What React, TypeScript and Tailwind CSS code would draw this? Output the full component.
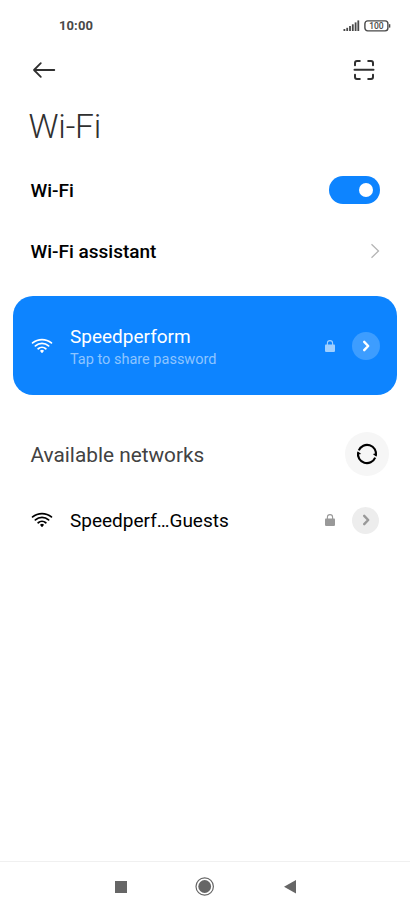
import clsx from "clsx";

function WifiIcon({ className }: { className?: string }) {
  return (
    <svg
      viewBox="0 0 22 16"
      className={clsx("w-[22px] h-4 shrink-0", className)}
      fill="none"
      stroke="currentColor"
      strokeWidth="1.8"
      strokeLinecap="round"
    >
      <path d="M1.6 4.9C7 .4 15 .4 20.4 4.9" />
      <path d="M4.4 7.9C8.3 4.6 13.7 4.6 17.6 7.9" />
      <path d="M7.2 10.7C9.4 8.8 12.6 8.8 14.8 10.7" />
      <path
        d="M9.8 12.9C10.5 12.4 11.5 12.4 12.2 12.9L11 14.2Z"
        fill="currentColor"
        strokeWidth="1.3"
        strokeLinejoin="round"
      />
    </svg>
  );
}

function LockIcon({ className }: { className?: string }) {
  return (
    <svg viewBox="0 0 12 14" className={clsx("w-3 h-3.5 shrink-0", className)}>
      <rect x="1" y="5.4" width="10" height="7.5" rx="0.8" fill="currentColor" />
      <path
        d="M3.4 6V4.2a2.6 2.6 0 0 1 5.2 0V6"
        fill="none"
        stroke="currentColor"
        strokeWidth="1.1"
      />
    </svg>
  );
}

function DetailButton({ className, size }: { className: string; size: string }) {
  return (
    <button
      className={clsx(
        "rounded-full flex items-center justify-center shrink-0",
        size,
        className
      )}
    >
      <svg
        viewBox="0 0 10 14"
        className="w-2.5 h-3.5"
        fill="none"
        stroke="currentColor"
        strokeWidth="2.4"
        strokeLinecap="round"
        strokeLinejoin="round"
      >
        <path d="M3.2 2.8L7.2 7L3.2 11.2" />
      </svg>
    </button>
  );
}

function StatusBar() {
  return (
    <div className="h-[52px] flex items-center justify-between pl-[59px] pr-[19px] text-[#484848]">
      <span className="text-[13px] font-bold tracking-[0.1px]">10:00</span>
      <div className="flex items-center gap-1">
        <svg viewBox="0 0 17 12" className="w-[17px] h-3" fill="currentColor">
          <rect x="0.5" y="9" width="1.8" height="2" />
          <rect x="3.3" y="7.8" width="1.8" height="3.2" />
          <rect x="6.1" y="6" width="1.8" height="5" />
          <rect x="8.9" y="4.3" width="1.8" height="6.7" />
          <rect x="11.7" y="2.4" width="1.8" height="8.6" />
          <rect x="14.4" y="0.4" width="1.8" height="10.6" />
        </svg>
        <svg viewBox="0 0 27 12" className="w-[27px] h-3">
          <rect
            x="0.9"
            y="0.9"
            width="23"
            height="10"
            rx="2.8"
            fill="none"
            stroke="currentColor"
            strokeWidth="1.4"
          />
          <rect x="25" y="4.2" width="1.3" height="3.4" fill="currentColor" />
          <text
            x="12.4"
            y="9.1"
            textAnchor="middle"
            fill="currentColor"
            className="text-[8.5px] font-medium"
          >
            100
          </text>
        </svg>
      </div>
    </div>
  );
}

function Header() {
  return (
    <div className="h-9 flex items-center justify-between pl-8 pr-[35px] text-[#303030]">
      <svg
        viewBox="0 0 24 18"
        className="w-6 h-[18px]"
        fill="none"
        stroke="currentColor"
        strokeWidth="1.8"
        strokeLinecap="round"
        strokeLinejoin="round"
      >
        <path d="M22.3 9H2M8.8 2.2L2 9L8.8 15.8" />
      </svg>
      <svg
        viewBox="0 0 22 22"
        className="w-[22px] h-[22px]"
        fill="none"
        stroke="currentColor"
        strokeWidth="2"
        strokeLinecap="round"
      >
        <path d="M2 6.3V4Q2 2 4 2H6.8M15.2 2H18Q20 2 20 4V6.3M20 15.7V18Q20 20 18 20H15.2M6.8 20H4Q2 20 2 18V15.7" />
        <path d="M1.5 10.8H20.5" />
      </svg>
    </div>
  );
}

function NavBar() {
  return (
    <div className="h-[50px] border-t border-[#f0f0f0] flex items-center justify-between pl-[115px] pr-[114px] text-[#666]">
      <div className="w-3 h-3 bg-[#666]" />
      <svg viewBox="0 0 20 20" className="w-5 h-5 mr-0.5">
        <circle cx="9.7" cy="9.5" r="8.7" fill="none" stroke="currentColor" strokeWidth="1.2" />
        <circle cx="9.7" cy="9.5" r="6.4" fill="currentColor" />
      </svg>
      <svg viewBox="0 0 12 14" className="w-3 h-3.5" fill="currentColor">
        <path d="M12 0V13.4L0 6.7Z" />
      </svg>
    </div>
  );
}

export default function App() {
  return (
    <div className="w-[410px] h-[911px] bg-white flex flex-col overflow-hidden whitespace-nowrap font-['Roboto',sans-serif]">
      <StatusBar />
      <Header />

      <h1 className="h-[78px] flex items-center pl-[28.5px] pt-px text-[33.5px] font-light tracking-[-0.2px] text-[#303030]">
        Wi-Fi
      </h1>

      <div className="h-12 flex items-center justify-between pl-[30.5px] pr-[30.5px]">
        <span className="pt-0.5 text-[19px] font-medium">Wi-Fi</span>
        <div className="w-[51px] h-7 rounded-full bg-[#0d84ff] flex items-center justify-end pr-[7px]">
          <div className="w-3.5 h-3.5 rounded-full bg-white" />
        </div>
      </div>

      <div className="h-[74px] flex items-center justify-between pl-[30.5px] pr-[30px]">
        <span className="pt-0.5 text-[19px] font-medium">Wi-Fi assistant</span>
        <svg
          viewBox="0 0 10 16"
          className="w-2.5 h-4 text-[#b5b5b5]"
          fill="none"
          stroke="currentColor"
          strokeWidth="1.3"
        >
          <path d="M1.5 1.3L8.5 8L1.5 14.7" />
        </svg>
      </div>

      {/* connected network */}
      <div className="mt-2 mx-[13px] h-[99px] shrink-0 rounded-[20px] bg-[#0d84ff] flex items-center pl-[18px] pr-[17px] text-white">
        <WifiIcon />
        <div className="ml-[17px] mt-[3px] flex-1">
          <div className="text-[19px] leading-6">Speedperform</div>
          <div className="text-[14.5px] leading-[21px] text-[#8dc5ff]">
            Tap to share password
          </div>
        </div>
        <LockIcon className="text-[#9fcfff]" />
        <DetailButton className="ml-4 bg-[#3d9dff] text-white" size="w-7 h-7" />
      </div>

      <div className="mt-[37px] h-11 shrink-0 flex items-center justify-between pl-[30.5px] pr-[21px]">
        <span className="pt-[3px] text-[20.8px] text-[#424242]">Available networks</span>
        <button className="w-11 h-11 rounded-full bg-[#f6f6f6] flex items-center justify-center">
          <svg
            viewBox="0 0 22 22"
            className="w-[22px] h-[22px]"
            fill="none"
            stroke="black"
            strokeWidth="2.1"
          >
            <path d="M2.8 7.3A9 9 0 0 1 19.9 12.6" />
            <path d="M19.2 14.7A9 9 0 0 1 2.1 9.4" />
            <path d="M16.8 10.9L20.5 13.8L20.9 10.2Z" fill="black" stroke="none" />
            <path d="M5.2 11.1L1.5 8.2L1.1 11.8Z" fill="black" stroke="none" />
          </svg>
        </button>
      </div>

      <div className="h-[88px] shrink-0 flex items-center pl-[31px] pr-[31px]">
        <WifiIcon />
        <span className="ml-[17px] pt-0.5 flex-1 text-[19px]">Speedperf…Guests</span>
        <LockIcon className="text-[#999]" />
        <DetailButton className="ml-4 bg-[#ededed] text-[#999]" size="w-[27px] h-[27px]" />
      </div>

      <div className="flex-1" />
      <NavBar />
    </div>
  );
}
